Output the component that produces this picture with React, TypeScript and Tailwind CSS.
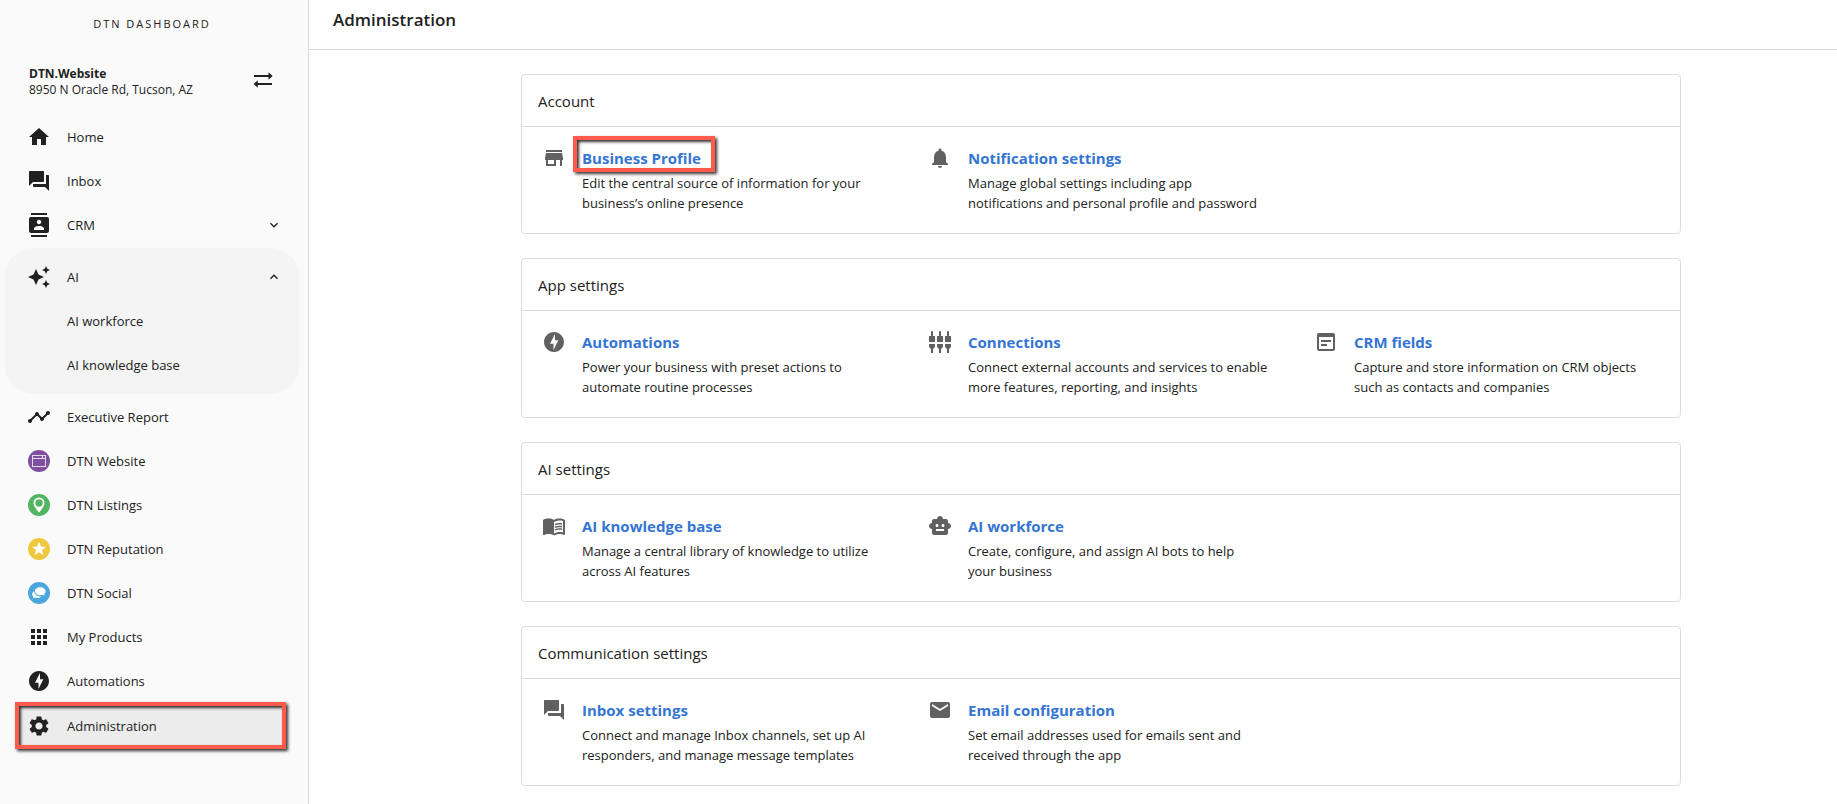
import type { ReactNode } from 'react';
import type { IconType } from 'react-icons';
import {
  MdApps,
  MdAutoAwesome,
  MdContacts,
  MdEmail,
  MdExpandLess,
  MdExpandMore,
  MdForum,
  MdHome,
  MdMenuBook,
  MdNotifications,
  MdOfflineBolt,
  MdSettings,
  MdSettingsInputComponent,
  MdSmartToy,
  MdStore,
  MdTimeline,
  MdWysiwyg,
} from 'react-icons/md';

type Setting = {
  title: string;
  text: string;
  icon: IconType;
  marked?: boolean;
};

type Section = {
  title: string;
  items: Setting[];
};

const SwapIcon = () => (
  <svg viewBox="0 0 24 24" className="size-6" fill="currentColor" aria-hidden="true">
    <path d="M3 7h14.500V4.300L21.700 8l-4.200 3.700V9H3zM21 15H6.800v-2.700L2.600 16l4.200 3.700V17H21z" />
  </svg>
);

const WebsiteLogo = () => (
  <svg viewBox="0 0 22 22" className="size-[22px]" aria-hidden="true">
    <circle cx="11" cy="11" r="11" fill="#7f4fa0" />
    <rect x="4.500" y="5.500" width="13" height="11" fill="none" stroke="#e5d9ee" />
    <path d="M4.500 8.500h13M14.500 6v2" stroke="#e5d9ee" />
  </svg>
);

const ListingsLogo = () => (
  <svg viewBox="0 0 22 22" className="size-[22px]" aria-hidden="true">
    <circle cx="11" cy="11" r="11" fill="#52b561" />
    <path d="M11 3.500a5.500 5.500 0 0 0-5.500 5.500c0 3.800 5.500 9.500 5.500 9.500s5.500-5.700 5.500-9.500A5.500 5.500 0 0 0 11 3.500z" fill="#fff" />
    <circle cx="11" cy="9" r="3.700" fill="#52b561" />
  </svg>
);

const ReputationLogo = () => (
  <svg viewBox="0 0 22 22" className="size-[22px]" aria-hidden="true">
    <circle cx="11" cy="11" r="11" fill="#efc83f" />
    <path d="m11 3.800 1.900 4.800 5.100.3-4 3.200 1.300 5-4.300-2.800-4.300 2.800 1.300-5-4-3.200 5.100-.3z" fill="#fff" />
  </svg>
);

const SocialLogo = () => (
  <svg viewBox="0 0 22 22" className="size-[22px]" aria-hidden="true">
    <circle cx="11" cy="11" r="11" fill="#4ba6dd" />
    <path d="M6.200 9.200c-1.200.7-2 1.800-2 3 0 1 .5 1.800 1.300 2.500l-.6 1.700 2.300-.8c2 .7 4.600.4 6-1.200-3.700.3-6.800-1.700-7-5.200z" fill="#fff" />
    <path d="M12.200 5.300c-3 0-5.300 1.700-5.300 3.900s2.300 4 5.300 4c.8 0 1.600-.1 2.300-.4l2.200.9-.6-1.900c1-.7 1.500-1.600 1.500-2.600 0-2.200-2.400-3.900-5.400-3.900z" fill="#fff" />
  </svg>
);

const materialIcon = (Icon: IconType) => <Icon className="size-6" aria-hidden="true" />;

const sections: Section[] = [
  {
    title: 'Account',
    items: [
      {
        title: 'Business Profile',
        text: 'Edit the central source of information for your business’s online presence',
        icon: MdStore,
        marked: true,
      },
      {
        title: 'Notification settings',
        text: 'Manage global settings including app notifications\u00a0and personal profile and password',
        icon: MdNotifications,
      },
    ],
  },
  {
    title: 'App settings',
    items: [
      {
        title: 'Automations',
        text: 'Power your business with preset actions to automate routine processes',
        icon: MdOfflineBolt,
      },
      {
        title: 'Connections',
        text: 'Connect external accounts and services to enable more features, reporting, and insights',
        icon: MdSettingsInputComponent,
      },
      {
        title: 'CRM fields',
        text: 'Capture and store information on CRM objects such as contacts and companies',
        icon: MdWysiwyg,
      },
    ],
  },
  {
    title: 'AI settings',
    items: [
      {
        title: 'AI knowledge base',
        text: 'Manage a central library of knowledge to utilize across AI features',
        icon: MdMenuBook,
      },
      {
        title: 'AI workforce',
        text: 'Create, configure, and assign AI bots to help your\u00a0business',
        icon: MdSmartToy,
      },
    ],
  },
  {
    title: 'Communication settings',
    items: [
      {
        title: 'Inbox settings',
        text: 'Connect and manage Inbox channels, set up AI responders, and manage message templates',
        icon: MdForum,
      },
      {
        title: 'Email configuration',
        text: 'Set email addresses used for emails sent and received through the app',
        icon: MdEmail,
      },
    ],
  },
];

function NavLink({ label, icon }: { label: string; icon?: ReactNode }) {
  return (
    <a href="#" className="flex h-11 items-center gap-4 pl-[27px]">
      <span className="flex size-6 shrink-0 items-center justify-center">{icon}</span>
      {label}
    </a>
  );
}

function NavGroup({ label, icon, open }: { label: string; icon: ReactNode; open: boolean }) {
  const Chevron = open ? MdExpandLess : MdExpandMore;
  return (
    <button type="button" aria-expanded={open} className="flex h-11 w-full items-center gap-4 pl-[27px] pr-[26px] text-left">
      <span className="flex size-6 shrink-0 items-center justify-center">{icon}</span>
      <span className="flex-1">{label}</span>
      <Chevron className="size-4" aria-hidden="true" />
    </button>
  );
}

function Sidebar() {
  return (
    <aside className="w-[309px] shrink-0 border-r border-[#dcdcdc] bg-[#fafafa] text-[#212121]">
      <div className="pt-4 pr-1 text-center text-[11px] leading-4 tracking-[2px]">DTN DASHBOARD</div>
      <div className="mt-[30px] mb-[17px] flex items-center justify-between pl-[29px] pr-[33px]">
        <div className="pt-1 text-xs leading-4">
          <div className="font-bold">DTN.Website</div>
          <div>8950 N Oracle Rd, Tucson, AZ</div>
        </div>
        <button type="button" aria-label="Switch location">
          <SwapIcon />
        </button>
      </div>
      <nav className="text-[13px] leading-5">
        <NavLink label="Home" icon={materialIcon(MdHome)} />
        <NavLink label="Inbox" icon={materialIcon(MdForum)} />
        <NavGroup label="CRM" icon={materialIcon(MdContacts)} open={false} />
        <div className="mt-px mr-[9px] mb-px ml-[5px] rounded-[28px] bg-[#f4f4f4] py-[7px]">
          <div className="-mr-[9px] -ml-[5px]">
            <NavGroup label="AI" icon={materialIcon(MdAutoAwesome)} open />
            <NavLink label="AI workforce" />
            <NavLink label="AI knowledge base" />
          </div>
        </div>
        <NavLink label="Executive Report" icon={materialIcon(MdTimeline)} />
        <NavLink label="DTN Website" icon={<WebsiteLogo />} />
        <NavLink label="DTN Listings" icon={<ListingsLogo />} />
        <NavLink label="DTN Reputation" icon={<ReputationLogo />} />
        <NavLink label="DTN Social" icon={<SocialLogo />} />
        <NavLink label="My Products" icon={materialIcon(MdApps)} />
        <NavLink label="Automations" icon={materialIcon(MdOfflineBolt)} />
        <a
          href="#"
          aria-current="page"
          className="-mt-px mr-[22px] ml-[15px] flex h-[47px] items-center gap-4 border-4 border-[#ff5a4c] bg-[#ececec] pl-2 shadow-[2px_2px_3px_rgba(0,0,0,0.8),inset_2px_2px_3px_rgba(0,0,0,0.8)]"
        >
          {materialIcon(MdSettings)}
          Administration
        </a>
      </nav>
    </aside>
  );
}

function SettingItem({ title, text, icon, marked }: Setting) {
  return (
    <div className="flex gap-4 px-5 pt-[19px] pb-5">
      <span className="shrink-0 text-[#616161]">{materialIcon(icon)}</span>
      <div>
        <div className="relative text-[15px] leading-6 font-bold">
          <a href="#" className="text-[#3575d3]">{title}</a>
          {marked && (
            <span className="pointer-events-none absolute -top-[10px] -left-[9px] h-9 w-[142px] border-4 border-[#ff5a4c] shadow-[2px_2px_3px_rgba(0,0,0,0.8),inset_2px_2px_3px_rgba(0,0,0,0.8)]" />
          )}
        </div>
        <p className="mt-[3px] text-[13px] leading-5">{text}</p>
      </div>
    </div>
  );
}

export default function App() {
  return (
    <div className="flex min-h-screen bg-white font-['Open_Sans','Noto_Sans',sans-serif] text-[#212121]">
      <Sidebar />
      <div className="min-w-0 flex-1">
        <header className="flex h-[50px] items-start border-b border-[#dcdcdc] px-6 pt-2">
          <h1 className="text-[17px] leading-6 font-semibold">Administration</h1>
        </header>
        <main className="pt-6 pl-14">
          <div className="mx-auto flex max-w-[1160px] flex-col gap-6">
            {sections.map((section) => (
              <section key={section.title} className="rounded border border-[#dcdcdc]">
                <h2 className="border-b border-[#dcdcdc] px-4 pt-[14px] pb-3 text-[15px] leading-[25px]">{section.title}</h2>
                <div className="grid grid-cols-3">
                  {section.items.map((item) => (
                    <SettingItem key={item.title} {...item} />
                  ))}
                </div>
              </section>
            ))}
          </div>
        </main>
      </div>
    </div>
  );
}
